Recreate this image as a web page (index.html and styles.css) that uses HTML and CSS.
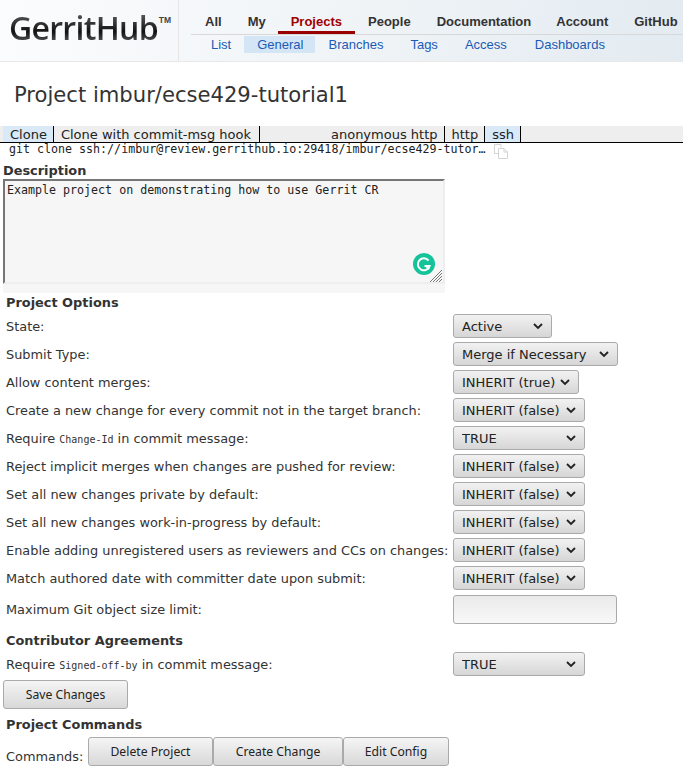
FILE: index.html
```html
<!DOCTYPE html>
<html lang="en">
<head>
  <meta charset="UTF-8" />
  <meta name="viewport" content="width=device-width, initial-scale=1" />
  <title>Project imbur/ecse429-tutorial1 - GerritHub</title>
  <link rel="stylesheet" href="styles.css">
</head>
<body>
  <header class="top">
    <div class="logo"><span class="logo-text">GerritHub</span><span class="logo-tm">TM</span></div>
    <nav class="menus">
      <div class="menu-main">
        <a href="#">All</a>
        <a href="#">My</a>
        <a href="#" class="active">Projects</a>
        <a href="#">People</a>
        <a href="#">Documentation</a>
        <a href="#">Account</a>
        <a href="#">GitHub</a>
      </div>
      <div class="menu-sub">
        <a href="#">List</a>
        <a href="#" class="active">General</a>
        <a href="#">Branches</a>
        <a href="#" class="tags-link">Tags</a>
        <a href="#" class="access-link">Access</a>
        <a href="#" class="dash-link">Dashboards</a>
      </div>
    </nav>
  </header>

  <h1 class="title">Project imbur/ecse429-tutorial1</h1>

  <div class="clone-tabs">
    <div class="tab-group">
      <span class="tab selected">Clone</span>
      <span class="tab tab-hook">Clone with commit-msg hook</span>
    </div>
    <div class="tab-group">
      <span class="tab">anonymous http</span>
      <span class="tab">http</span>
      <span class="tab selected">ssh</span>
    </div>
  </div>
  <div class="clone-line">
    <span class="clone-cmd">git clone ssh://imbur@review.gerrithub.io:29418/imbur/ecse429-tutor…</span>
    <svg class="copy-icon" width="15" height="15" viewBox="0 0 15 15">
      <path d="M.5 .5h6.5v3M.5 .5v9h3.5" fill="none" stroke="#d4d4d4" stroke-width="1" />
      <path d="M4.5 4.5h5.5l3.5 3.5v6.5h-9z" fill="#fff" stroke="#d4d4d4" stroke-width="1" />
      <path d="M10 4.5v3.5h3.5" fill="none" stroke="#d4d4d4" stroke-width="1" />
    </svg>
  </div>

  <div class="section-head desc-head">Description</div>
  <div class="desc-box">
    <textarea class="desc" spellcheck="false">Example project on demonstrating how to use Gerrit CR</textarea>
    <svg class="grammarly" width="22" height="22" viewBox="0 0 22 22">
      <circle cx="11" cy="11" r="11" fill="#15c39a" />
      <path d="M15.6 7.6A6 6 0 1 0 16.6 13H11.5" fill="none" stroke="#fff" stroke-width="2" />
      <path d="M13.5 13.4l2.6 2.6" fill="none" stroke="#fff" stroke-width="2" />
    </svg>
    <svg class="resize-grip" width="12" height="12" viewBox="0 0 12 12">
      <path d="M0 12L12 0M3 12L12 3M6 12l6-6M9 12l3-3" fill="none" stroke="#777" stroke-width="1" />
    </svg>
  </div>

  <div class="section-head">Project Options</div>
  <div class="options">
    <div class="option"><span>State:</span>
      <select class="w-active"><option>Active</option></select></div>
    <div class="option"><span>Submit Type:</span>
      <select class="w-merge"><option>Merge if Necessary</option></select></div>
    <div class="option"><span>Allow content merges:</span>
      <select class="w-true"><option>INHERIT (true)</option></select></div>
    <div class="option"><span>Create a new change for every commit not in the target branch:</span>
      <select class="w-false"><option>INHERIT (false)</option></select></div>
    <div class="option"><span>Require <code>Change-Id</code> in commit message:</span>
      <select class="w-false"><option>TRUE</option></select></div>
    <div class="option"><span>Reject implicit merges when changes are pushed for review:</span>
      <select class="w-false"><option>INHERIT (false)</option></select></div>
    <div class="option"><span>Set all new changes private by default:</span>
      <select class="w-false"><option>INHERIT (false)</option></select></div>
    <div class="option"><span>Set all new changes work-in-progress by default:</span>
      <select class="w-false"><option>INHERIT (false)</option></select></div>
    <div class="option"><span>Enable adding unregistered users as reviewers and CCs on changes:</span>
      <select class="w-false"><option>INHERIT (false)</option></select></div>
    <div class="option"><span>Match authored date with committer date upon submit:</span>
      <select class="w-false"><option>INHERIT (false)</option></select></div>
    <div class="option option-size"><span>Maximum Git object size limit:</span>
      <input class="size-input" type="text" /></div>
  </div>

  <div class="section-head agreements-head">Contributor Agreements</div>
  <div class="option agreement-row"><span>Require <code>Signed-off-by</code> in commit message:</span>
    <select class="w-false"><option>TRUE</option></select></div>

  <button class="btn save-btn" type="button">Save Changes</button>

  <div class="section-head commands-head">Project Commands</div>
  <div class="commands">
    <span class="commands-label">Commands:</span>
    <button class="btn delete-btn" type="button">Delete Project</button>
    <button class="btn create-btn" type="button">Create Change</button>
    <button class="btn config-btn" type="button">Edit Config</button>
  </div>
</body>
</html>
```

FILE: styles.css
```css
html, body {
  overflow: hidden;
}
body {
  margin: 0;
  height: 781px;
  background: #fff;
  color: #333;
  font-family: "DejaVu Sans", sans-serif;
  font-size: 12.9px;
}

/* header */
.top {
  display: flex;
  height: 61px;
  background: linear-gradient(100deg, #fbfcfd 0%, #f0f4f7 50%, #e3ebf1 100%);
  border-bottom: 1px solid #e8e8e8;
}
.logo {
  display: flex;
  align-items: flex-start;
  width: 179px;
  padding: 9px 0 0 9px;
  box-sizing: border-box;
  border-right: 1px solid #e6e6e6;
  flex-shrink: 0;
}
.logo-text {
  font-family: "Open Sans", sans-serif;
  font-weight: 600;
  font-size: 32px;
  line-height: 38px;
  letter-spacing: -0.7px;
  background: linear-gradient(#555 15%, #111 60%, #444 80%);
  -webkit-background-clip: text;
  background-clip: text;
  color: transparent;
}
.logo-tm {
  font-family: "Liberation Sans", sans-serif;
  font-weight: bold;
  font-size: 8.5px;
  line-height: 9px;
  margin: 7px 0 0 1px;
  color: #444;
}
.menus {
  flex: 1;
  padding-left: 12px;
  font-family: "Liberation Sans", sans-serif;
  font-size: 13px;
}
.menu-main {
  display: flex;
  height: 35px;
  box-sizing: border-box;
  border-bottom: 1px solid #d8d8d8;
  padding: 14px 0 0 14px;
}
.menu-main a {
  color: #333;
  font-weight: bold;
  text-decoration: none;
  line-height: 15px;
  margin-right: 26px;
}
.menu-main a:nth-child(2) { margin-right: 25px; }
.menu-main a:nth-child(5) { margin-right: 25px; }
.menu-main a.active {
  color: #a00000;
  padding: 0 13px;
  margin-left: -13px;
  margin-right: 13px;
  height: 17px;
  border-bottom: 3px solid #900;
}
.menu-sub {
  display: flex;
  padding-left: 7px;
  margin-top: 1px;
}
.menu-sub a {
  color: #1a5bb5;
  text-decoration: none;
  line-height: 17px;
  padding: 0 13px;
}
.menu-sub a.active {
  background: #d4e6f5;
  padding-right: 12px;
}
.menu-sub .tags-link { margin-left: 1px; }
.menu-sub .access-link { margin-left: 1px; }
.menu-sub .dash-link { margin-left: 2px; }

/* title */
.title {
  margin: 0;
  padding: 20px 0 0 14px;
  height: 44px;
  font-size: 21.12px;
  font-weight: normal;
  line-height: 26px;
  color: #333;
}

/* clone panel */
.clone-tabs {
  display: flex;
  justify-content: space-between;
  height: 16px;
  padding-left: 3px;
  background: #eee;
  border-bottom: 1px solid #000;
  font-size: 13px;
}
.tab-group {
  display: flex;
}
.tab-group:last-child {
  margin-right: 162px;
}
.tab {
  padding: 0 6px 0 7px;
  line-height: 17px;
  color: #222;
  border-right: 1px solid #000;
}
.tab-hook {
  padding-right: 8px;
}
.tab.selected {
  background: #d9e9f7;
}
.clone-line {
  display: flex;
  align-items: flex-start;
  height: 15px;
  padding-left: 9px;
}
.clone-cmd {
  font-family: "DejaVu Sans Mono", monospace;
  font-size: 11.65px;
  line-height: 13px;
  color: #222;
  white-space: nowrap;
}
.copy-icon {
  margin-left: 8px;
  margin-top: 1px;
}

/* description */
.section-head {
  font-weight: bold;
  line-height: 16px;
  padding-left: 6px;
  color: #333;
}
.desc-head {
  padding-left: 3px;
  margin-top: 5px;
}
.desc-box {
  position: relative;
  width: 442px;
  height: 114px;
  margin: 0 0 2px 3px;
  background: #f6f6f6;
}
.desc {
  display: block;
  width: 100%;
  height: 105px;
  box-sizing: border-box;
  padding: 2px 2px;
  border: 2px solid;
  border-color: #767676 #eee #eee #767676;
  background: #f6f6f6;
  font-family: "DejaVu Sans Mono", monospace;
  font-size: 11.65px;
  line-height: 14px;
  color: #222;
  outline: none;
  resize: none;
}
.grammarly {
  position: absolute;
  right: 10px;
  top: 74px;
}
.resize-grip {
  position: absolute;
  right: 3px;
  top: 91px;
}

/* option rows */
.options {
  margin-top: 1px;
}
.option {
  display: flex;
  align-items: center;
  height: 28px;
  padding-left: 6px;
}
.option > span {
  width: 447px;
  flex-shrink: 0;
  white-space: nowrap;
  color: #333;
}
code {
  font-family: "DejaVu Sans Mono", monospace;
  font-size: 10px;
}
select {
  appearance: none;
  height: 24px;
  padding: 0 8px;
  border: 1px solid #aaa;
  border-radius: 3px;
  background: url("data:image/svg+xml,%3Csvg xmlns='http://www.w3.org/2000/svg' width='10' height='7'%3E%3Cpath d='M1 1l4 4 4-4' fill='none' stroke='%23222' stroke-width='1.8'/%3E%3C/svg%3E") no-repeat right 8px center, linear-gradient(#f2f2f2, #d6d6d6);
  font-family: "DejaVu Sans", sans-serif;
  font-size: 13px;
  color: #222;
}
.w-active { width: 99px; }
.w-merge { width: 165px; }
.w-true { width: 126px; }
.w-false { width: 132px; }
.option-size {
  height: 29px;
  margin-top: 3px;
}
.size-input {
  width: 164px;
  height: 29px;
  box-sizing: border-box;
  border: 1px solid #aaa;
  border-radius: 3px;
  background: linear-gradient(#eaeaea, #f8f8f8);
}
.agreements-head {
  margin-top: 9px;
}
.agreement-row {
  margin-top: 1px;
}

/* buttons */
.btn {
  height: 29px;
  padding: 0;
  border: 1px solid #aaa;
  border-radius: 3px;
  background: linear-gradient(#f5f5f5, #d8d8d8);
  font-family: "Noto Sans", sans-serif;
  font-size: 12.2px;
  color: #222;
}
.save-btn {
  display: block;
  width: 125px;
  margin: 2px 0 0 3px;
}
.commands-head {
  margin-top: 8px;
}
.commands {
  display: flex;
  align-items: flex-end;
  margin-top: 4px;
  padding-left: 6px;
}
.commands-label {
  width: 82px;
  line-height: 19px;
}
.delete-btn { width: 125px; }
.create-btn { width: 130px; }
.config-btn { width: 106px; }
```
